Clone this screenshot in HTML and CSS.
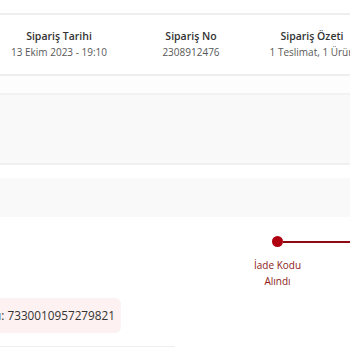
FILE: index.html
```html
<!DOCTYPE html>
<html lang="tr">
<head>
    <meta charset="UTF-8">
    <meta name="viewport" content="width=device-width, initial-scale=1.0">
    <title>Sipariş Detayı</title>
    <link rel="stylesheet" href="styles.css">
</head>
<body>
    <div class="page">
        <div class="ozet">
            <div class="kolon">
                <div class="baslik">Sipariş Tarihi</div>
                <div class="deger">13 Ekim 2023 - 19:10</div>
            </div>
            <div class="kolon">
                <div class="baslik">Sipariş No</div>
                <div class="deger">2308912476</div>
            </div>
            <div class="kolon">
                <div class="baslik">Sipariş Özeti</div>
                <div class="deger">1 Teslimat, 1 Ürün</div>
            </div>
        </div>
        <div class="bant"></div>
        <div class="gri-alan"></div>
        <div class="bosluk"></div>
        <div class="takip">
            <div class="adim">
                <div class="cizgi-satir">
                    <span class="nokta"></span>
                    <span class="cizgi"></span>
                </div>
                <div class="adim-yazi">İade Kodu<br>Alındı</div>
            </div>
        </div>
        <div class="kod-satir">
            <div class="kod-kutu">İade Kodu: 7330010957279821</div>
        </div>
        <div class="alt-cizgi"></div>
    </div>
</body>
</html>
```

FILE: styles.css
```css
body {
    margin: 0;
    background-color: #FFFFFF;
    font-family: "Open Sans", Arial, sans-serif;
    color: #333333;
    overflow: hidden;
}
.page {
    width: 350px;
    padding-top: 13px;
    overflow: hidden;
}
.ozet {
    display: grid;
    grid-template-columns: 118px 146px 96px;
    border-top: 2px solid #EEEEEE;
    border-bottom: 2px solid #EEEEEE;
    padding: 13px 0 14px 0;
    width: 360px;
}
.kolon {
    text-align: center;
    white-space: nowrap;
}
.baslik {
    font-size: 10.5px;
    font-weight: 600;
    color: #333333;
    line-height: 16px;
}
.deger {
    font-size: 10px;
    color: #585858;
    line-height: 16px;
}
.bant {
    height: 17px;
    background-color: #FDFDFD;
    border-bottom: 2px solid #F2F2F2;
}
.gri-alan {
    height: 68px;
    background-color: #F9F9F9;
    border-bottom: 2px solid #F0F0F0;
}
.bosluk {
    height: 13px;
}
.takip {
    background: linear-gradient(#F9F9F9 0, #F9F9F9 39px, #FFFFFF 39px);
    padding-top: 58px;
    display: flex;
    justify-content: flex-end;
}
.adim {
    width: 100px;
    display: flex;
    flex-direction: column;
    align-items: flex-start;
}
.cizgi-satir {
    display: flex;
    align-items: center;
    width: 100%;
    padding-left: 22px;
    box-sizing: border-box;
}
.nokta {
    width: 11px;
    height: 11px;
    border-radius: 50%;
    background-color: #B00010;
    flex-shrink: 0;
}
.cizgi {
    flex: 1;
    height: 2px;
    background-color: #8E0A12;
}
.adim-yazi {
    width: 55px;
    margin-top: 10px;
    text-align: center;
    font-size: 10px;
    line-height: 16px;
    color: #8E1A1A;
    white-space: nowrap;
}
.kod-satir {
    margin-top: 9px;
    display: flex;
}
.kod-kutu {
    margin-left: -64px;
    background-color: #FDF1F1;
    border-radius: 6px;
    padding: 0 6px 0 10px;
    line-height: 35px;
    font-size: 11.75px;
    color: #333333;
    white-space: nowrap;
}
.alt-cizgi {
    margin-top: 13px;
    width: 175px;
    height: 1px;
    background-color: #EEEEEE;
}
```
